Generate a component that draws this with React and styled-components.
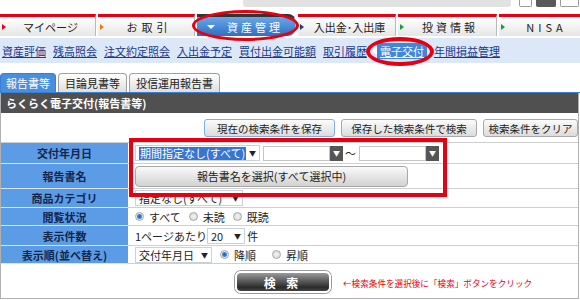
import React from "react";
import styled, { createGlobalStyle } from "styled-components";

const GlobalStyle = createGlobalStyle`
  html, body { margin: 0; padding: 0; background: #fff; }
  body {
    font-family: "Noto Sans CJK JP", "Noto Sans", sans-serif;
    font-size: 11px;
    color: #222;
  }
`;

const Page = styled.div`
  position: relative;
  width: 580px;
  height: 300px;
  overflow: hidden;
  display: flex;
  flex-direction: column;
`;

/* browser chrome fragment on top */
const TopStrip = styled.div`
  height: 14px;
  display: flex;
  align-items: flex-start;
`;
const BrowserBar = styled.div`
  margin-left: 243px;
  width: 268px;
  height: 7px;
  background: #e2e2e2;
  border-radius: 0 0 3px 3px;
`;
const WinBtn = styled.div`
  margin-left: ${(p) => p.gap}px;
  width: ${(p) => p.w}px;
  height: 7px;
  background: ${(p) => (p.dark ? "#5a5a5a" : "#fff")};
  border: 1px solid ${(p) => (p.dark ? "#5a5a5a" : "#9a9a9a")};
  border-top: none;
  border-radius: 0 0 2px 2px;
  box-sizing: border-box;
`;

/* main navigation */
const NavBar = styled.div`
  display: flex;
  gap: 2px;
  height: 22px;
`;
const NavTab = styled.div`
  width: ${(p) => p.w}px;
  flex-shrink: 0;
  box-sizing: border-box;
  border-top: 3px solid ${(p) => (p.active ? "#333" : "#e60012")};
  border-right: 1px solid #b8b8b8;
  background: ${(p) =>
    p.active
      ? "linear-gradient(#6aa6e8, #2f6fc4)"
      : "linear-gradient(#ffffff, #e6e6e6)"};
  border-radius: ${(p) => (p.active ? "0 8px 8px 0" : "0")};
  display: flex;
  align-items: center;
  padding-left: 2px;
  color: ${(p) => (p.active ? "#fff" : "#222")};
  font-size: 11px;
  letter-spacing: ${(p) => p.ls || 0}px;
`;
const Marker = styled.span`
  width: 0;
  height: 0;
  border-top: 3px solid transparent;
  border-bottom: 3px solid transparent;
  border-left: 4px solid ${(p) => p.color};
`;
const DownMark = styled.span`
  margin-left: 8px;
  width: 0;
  height: 0;
  border-left: 4px solid transparent;
  border-right: 4px solid transparent;
  border-top: 4px solid #fff;
`;
const NavLabel = styled.span`
  flex: 1;
  text-align: center;
`;

/* sub navigation */
const SubNav = styled.div`
  margin-top: 2px;
  height: 25px;
  background: #dce8f8;
  display: flex;
  align-items: center;
  gap: 7px;
  padding-left: 2px;
`;
const SubLink = styled.a`
  position: relative;
  color: ${(p) => (p.active ? "#fff" : "#1a3a8c")};
  background: ${(p) => (p.active ? "#3f86dc" : "transparent")};
  padding: ${(p) => (p.active ? "1px 3px" : "0")};
  margin-left: ${(p) => (p.active ? "3px" : "0")};
  text-decoration: underline;
  font-size: 11px;
  line-height: 14px;
  ${(p) =>
    p.active &&
    `&::before {
      content: "";
      position: absolute;
      left: -5px;
      top: 4px;
      border-top: 4px solid transparent;
      border-bottom: 4px solid transparent;
      border-right: 5px solid #fff;
    }`}
`;

/* content tabs */
const TabRow = styled.div`
  margin-top: 9px;
  height: 20px;
  display: flex;
  align-items: flex-end;
  gap: 2px;
  border-bottom: 1px solid #3b7fd0;
`;
const Tab = styled.div`
  height: 19px;
  box-sizing: border-box;
  padding: 0 ${(p) => (p.active ? 5 : 6)}px;
  border: 1px solid ${(p) => (p.active ? "#3b7fd0" : "#a0a0a0")};
  border-bottom: none;
  border-radius: 4px 4px 0 0;
  background: ${(p) => (p.active ? "#4a8ede" : "linear-gradient(#ffffff, #dedede)")};
  color: ${(p) => (p.active ? "#fff" : "#222")};
  display: flex;
  align-items: center;
  font-size: 11px;
`;

const Body = styled.div`
  width: 577px;
  border: 1px solid #b0b0b0;
  border-top: none;
  display: flex;
  flex-direction: column;
`;
const TitleBar = styled.div`
  height: 20px;
  background: #505050;
  color: #fff;
  font-weight: bold;
  font-size: 11px;
  display: flex;
  align-items: center;
  padding-left: 5px;
`;
const ButtonRow = styled.div`
  height: 29px;
  box-sizing: border-box;
  padding-top: 6px;
  display: flex;
  justify-content: flex-end;
  gap: 6px;
`;
const GreyButton = styled.div`
  width: ${(p) => p.w}px;
  height: 18px;
  box-sizing: border-box;
  border: 1px solid ${(p) => (p.focus ? "#7fb0e0" : "#a9a9a9")};
  border-radius: 3px;
  background: linear-gradient(#fbfbfb, #dcdcdc);
  display: flex;
  align-items: center;
  justify-content: center;
  font-size: 10.5px;
  color: #222;
`;

/* form */
const FormTable = styled.div`
  border-top: 1px solid #cfcfcf;
  display: flex;
  flex-direction: column;
`;
const Row = styled.div`
  display: flex;
  height: ${(p) => p.h}px;
`;
const Label = styled.div`
  width: 127px;
  flex-shrink: 0;
  background: #5c9ce6;
  border-bottom: 1px solid #d6e5f7;
  color: #14254a;
  font-weight: bold;
  font-size: 11px;
  display: flex;
  align-items: center;
  justify-content: center;
`;
const Value = styled.div`
  flex: 1;
  border-bottom: 1px solid #cfcfcf;
  display: flex;
  align-items: center;
  padding-left: 7px;
  gap: ${(p) => p.gap || 0}px;
`;
const SelectBox = styled.div`
  width: ${(p) => p.w}px;
  height: 16px;
  box-sizing: border-box;
  border: 1px solid #c9d2dc;
  background: #fff;
  display: flex;
  align-items: center;
  padding: 0 3px;
  font-size: 11px;
`;
const Highlight = styled.span`
  background: #3676d2;
  color: #fff;
  padding: 0 1px;
  line-height: 13px;
`;
const Arrow = styled.span`
  margin-left: auto;
  font-size: 7px;
  color: #222;
`;
const DateInput = styled.div`
  display: flex;
  align-items: center;
  margin-left: ${(p) => p.ml || 0}px;
`;
const DateField = styled.div`
  width: 67px;
  height: 15px;
  box-sizing: border-box;
  border: 1px solid #c4c4c4;
  background: #fff;
`;
const DarkDrop = styled.div`
  width: 13px;
  height: 15px;
  background: #555;
  color: #fff;
  font-size: 7px;
  display: flex;
  align-items: center;
  justify-content: center;
`;
const Tilde = styled.span`
  margin: 0 3px 0 2px;
  font-size: 11px;
`;
const WideButton = styled.div`
  width: 273px;
  height: 21px;
  box-sizing: border-box;
  border: 1px solid #a8a8a8;
  border-radius: 4px;
  background: linear-gradient(#fafafa, #d2d2d2);
  display: flex;
  align-items: center;
  justify-content: center;
  font-size: 11px;
`;
const RadioItem = styled.label`
  display: flex;
  align-items: center;
  gap: 5px;
  margin-right: 8px;
  font-size: 11px;
`;
const Radio = styled.span`
  width: 9px;
  height: 9px;
  box-sizing: border-box;
  border-radius: 50%;
  border: 1px solid #a8a8a8;
  background: ${(p) =>
    p.checked
      ? "radial-gradient(circle, #1f5fb8 0, #3c86dc 2px, #e8e8e8 3px)"
      : "radial-gradient(circle, #f4f4f4 0, #d8d8d8 4px)"};
`;
const Text = styled.span`
  font-size: 11px;
  margin-right: ${(p) => p.mr || 0}px;
`;

/* search */
const SearchRow = styled.div`
  height: 34px;
  display: flex;
  align-items: center;
  padding-left: 234px;
  gap: 12px;
`;
const SearchButton = styled.div`
  width: 96px;
  height: 22px;
  box-sizing: border-box;
  border: 2px solid #fff;
  border-radius: 6px;
  box-shadow: 0 0 0 1px #9a9a9a;
  background: linear-gradient(#9a9a9a, #5a5a5a 45%, #2a2a2a 80%, #444);
  color: #fff;
  font-weight: bold;
  font-size: 12px;
  letter-spacing: 4px;
  display: flex;
  align-items: center;
  justify-content: center;
  margin-top: 2px;
`;
const Hint = styled.span`
  color: #e60012;
  font-size: 8.6px;
  margin-top: 3px;
`;

/* annotations drawn over the screenshot */
const Ring = styled.div`
  position: absolute;
  left: ${(p) => p.x}px;
  top: ${(p) => p.y}px;
  width: ${(p) => p.w}px;
  height: ${(p) => p.h}px;
  box-sizing: border-box;
  border: ${(p) => p.t}px solid #e60012;
  border-radius: ${(p) => (p.box ? "0" : "50%")};
  pointer-events: none;
`;

const subLinks = ["資産評価", "残高照会", "注文約定照会", "入出金予定", "買付出金可能額", "取引履歴"];

export default function App() {
  return (
    <>
      <GlobalStyle />
      <Page>
        <TopStrip>
          <BrowserBar />
          <WinBtn gap={8} w={13} />
          <WinBtn gap={4} w={20} dark />
          <WinBtn gap={4} w={19} />
        </TopStrip>

        <NavBar>
          <NavTab w={96}>
            <Marker color="#e60012" />
            <NavLabel>マイページ</NavLabel>
          </NavTab>
          <NavTab w={97} ls={4}>
            <Marker color="#e87a10" />
            <NavLabel>お取引</NavLabel>
          </NavTab>
          <NavTab w={99} active ls={3}>
            <DownMark />
            <NavLabel>資産管理</NavLabel>
          </NavTab>
          <NavTab w={98}>
            <Marker color="#1d3f7a" />
            <NavLabel>入出金･入出庫</NavLabel>
          </NavTab>
          <NavTab w={99} ls={3}>
            <Marker color="#1f9a3a" />
            <NavLabel>投資情報</NavLabel>
          </NavTab>
          <NavTab w={90} ls={4}>
            <Marker color="#1f9a3a" />
            <NavLabel>NISA</NavLabel>
          </NavTab>
        </NavBar>

        <SubNav>
          {subLinks.map((s) => (
            <SubLink key={s}>{s}</SubLink>
          ))}
          <SubLink active>電子交付</SubLink>
          <SubLink>年間損益管理</SubLink>
        </SubNav>

        <TabRow>
          <Tab active>報告書等</Tab>
          <Tab>目論見書等</Tab>
          <Tab>投信運用報告書</Tab>
        </TabRow>

        <Body>
          <TitleBar>らくらく電子交付(報告書等)</TitleBar>
          <ButtonRow>
            <GreyButton w={131} focus>現在の検索条件を保存</GreyButton>
            <GreyButton w={136}>保存した検索条件で検索</GreyButton>
            <GreyButton w={95}>検索条件をクリア</GreyButton>
          </ButtonRow>

          <FormTable>
            <Row h={21}>
              <Label>交付年月日</Label>
              <Value>
                <SelectBox w={125}>
                  <Highlight>期間指定なし(すべて)</Highlight>
                  <Arrow>▼</Arrow>
                </SelectBox>
                <DateInput ml={3}>
                  <DateField />
                  <DarkDrop>▼</DarkDrop>
                </DateInput>
                <Tilde>〜</Tilde>
                <DateInput>
                  <DateField />
                  <DarkDrop>▼</DarkDrop>
                </DateInput>
              </Value>
            </Row>
            <Row h={25}>
              <Label>報告書名</Label>
              <Value>
                <WideButton>報告書名を選択(すべて選択中)</WideButton>
              </Value>
            </Row>
            <Row h={19}>
              <Label>商品カテゴリ</Label>
              <Value>
                <SelectBox w={108}>
                  <span>指定なし(すべて)</span>
                  <Arrow>▼</Arrow>
                </SelectBox>
              </Value>
            </Row>
            <Row h={18}>
              <Label>閲覧状況</Label>
              <Value>
                <RadioItem>
                  <Radio checked />
                  すべて
                </RadioItem>
                <RadioItem>
                  <Radio />
                  未読
                </RadioItem>
                <RadioItem>
                  <Radio />
                  既読
                </RadioItem>
              </Value>
            </Row>
            <Row h={20}>
              <Label>表示件数</Label>
              <Value>
                <Text>1ページあたり</Text>
                <SelectBox w={38}>
                  <span>20</span>
                  <Arrow>▼</Arrow>
                </SelectBox>
                <Text>&nbsp;件</Text>
              </Value>
            </Row>
            <Row h={18}>
              <Label>表示順(並べ替え)</Label>
              <Value gap={8}>
                <SelectBox w={77}>
                  <span>交付年月日</span>
                  <Arrow>▼</Arrow>
                </SelectBox>
                <RadioItem>
                  <Radio checked />
                  降順
                </RadioItem>
                <RadioItem>
                  <Radio />
                  昇順
                </RadioItem>
              </Value>
            </Row>
          </FormTable>

          <SearchRow>
            <SearchButton>検 索</SearchButton>
            <Hint>←検索条件を選択後に「検索」ボタンをクリック</Hint>
          </SearchRow>
        </Body>

        <Ring x={192} y={10} w={107} h={31} t={3} />
        <Ring x={366} y={37} w={68} h={29} t={4} />
        <Ring x={129} y={138} w={318} h={59} t={4} box />
      </Page>
    </>
  );
}
